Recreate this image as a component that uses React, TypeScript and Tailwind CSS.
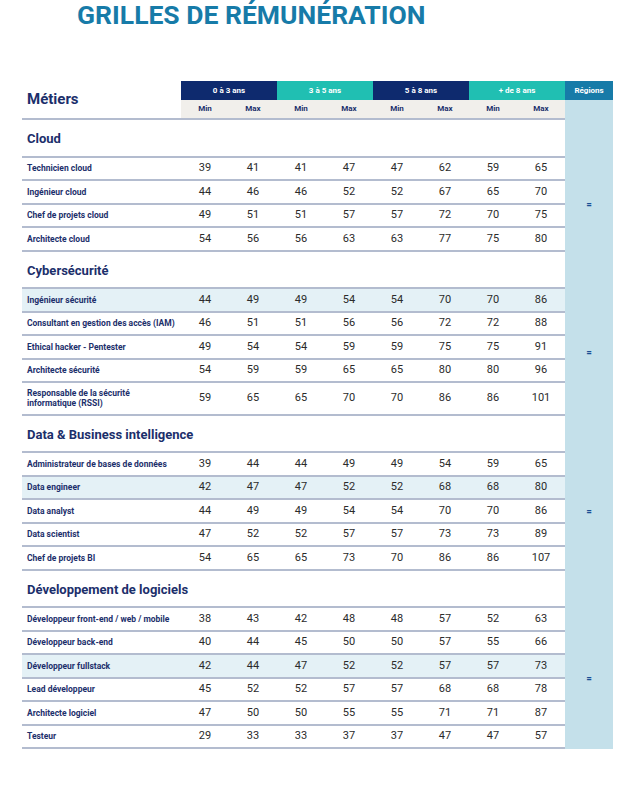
import React from "react";

type Row = { label: string; values: number[]; hl?: boolean; tall?: boolean };
type Section = { title: string; rows: Row[] };

const sections: Section[] = [
  {
    title: "Cloud",
    rows: [
      { label: "Technicien cloud", values: [39, 41, 41, 47, 47, 62, 59, 65] },
      { label: "Ingénieur cloud", values: [44, 46, 46, 52, 52, 67, 65, 70] },
      { label: "Chef de projets cloud", values: [49, 51, 51, 57, 57, 72, 70, 75] },
      { label: "Architecte cloud", values: [54, 56, 56, 63, 63, 77, 75, 80] },
    ],
  },
  {
    title: "Cybersécurité",
    rows: [
      { label: "Ingénieur sécurité", values: [44, 49, 49, 54, 54, 70, 70, 86], hl: true },
      { label: "Consultant en gestion des accès (IAM)", values: [46, 51, 51, 56, 56, 72, 72, 88] },
      { label: "Ethical hacker - Pentester", values: [49, 54, 54, 59, 59, 75, 75, 91] },
      { label: "Architecte sécurité", values: [54, 59, 59, 65, 65, 80, 80, 96] },
      {
        label: "Responsable de la sécurité informatique (RSSI)",
        values: [59, 65, 65, 70, 70, 86, 86, 101],
        tall: true,
      },
    ],
  },
  {
    title: "Data & Business intelligence",
    rows: [
      { label: "Administrateur de bases de données", values: [39, 44, 44, 49, 49, 54, 59, 65] },
      { label: "Data engineer", values: [42, 47, 47, 52, 52, 68, 68, 80], hl: true },
      { label: "Data analyst", values: [44, 49, 49, 54, 54, 70, 70, 86] },
      { label: "Data scientist", values: [47, 52, 52, 57, 57, 73, 73, 89] },
      { label: "Chef de projets BI", values: [54, 65, 65, 73, 70, 86, 86, 107] },
    ],
  },
  {
    title: "Développement de logiciels",
    rows: [
      { label: "Développeur front-end / web / mobile", values: [38, 43, 42, 48, 48, 57, 52, 63] },
      { label: "Développeur back-end", values: [40, 44, 45, 50, 50, 57, 55, 66] },
      { label: "Développeur fullstack", values: [42, 44, 47, 52, 52, 57, 57, 73], hl: true },
      { label: "Lead développeur", values: [45, 52, 52, 57, 57, 68, 68, 78] },
      { label: "Architecte logiciel", values: [47, 50, 50, 55, 55, 71, 71, 87] },
      { label: "Testeur", values: [29, 33, 33, 37, 37, 47, 47, 57] },
    ],
  },
];

const bands = [
  { label: "0 à 3 ans", cls: "bg-[#0e2a6e]" },
  { label: "3 à 5 ans", cls: "bg-[#20bfb2]" },
  { label: "5 à 8 ans", cls: "bg-[#0e2a6e]" },
  { label: "+ de 8 ans", cls: "bg-[#20bfb2]" },
];

function TableRow({ row }: { row: Row }) {
  return (
    <div
      className={`flex items-center border-b-2 border-[#b3bccf] ${row.tall ? "h-[32.5px]" : "h-[23.5px]"} ${row.hl ? "bg-[#e4f1f6]" : ""}`}
    >
      <div className="w-[159px] pl-[5px] pr-1 text-[8.5px] font-bold leading-[10.5px] text-[#1c2f6b]">
        {row.tall ? (
          <>
            Responsable de la sécurité
            <br />
            informatique (RSSI)
          </>
        ) : (
          row.label
        )}
      </div>
      {row.values.map((v, i) => (
        <div key={i} className="w-[48px] text-center text-[11px] text-[#2b2b2b]">
          {v}
        </div>
      ))}
    </div>
  );
}

function SectionBlock({ section }: { section: Section }) {
  return (
    <div>
      <div className="flex">
        <div className="flex h-[37.5px] w-[543px] items-center border-b-2 border-[#b3bccf] pl-[5px] pt-[2px] text-[13px] font-bold text-[#1c2f6b]">
          {section.title}
        </div>
        <div className="w-[48px] bg-[#c4e0ea]" />
      </div>
      <div className="flex">
        <div className="flex w-[543px] flex-col">
          {section.rows.map((r) => (
            <TableRow key={r.label} row={r} />
          ))}
        </div>
        <div className="flex w-[48px] items-center justify-center bg-[#c4e0ea] text-[10px] font-medium text-[#1a4f95]">
          =
        </div>
      </div>
    </div>
  );
}

export default function App() {
  return (
    <div className="min-h-screen bg-white font-['Roboto',sans-serif]">
      <h1 className="pl-[77px] pt-[1px] text-[26.5px] font-bold leading-[28px] text-[#177ba8]">
        GRILLES DE RÉMUNÉRATION
      </h1>

      <div className="mt-[52px] pl-[22px]">
        {/* header */}
        <div className="flex">
          <div className="flex w-[159px] items-center border-b-2 border-[#b3bccf] pl-[5px] text-[15px] font-bold text-[#1c2f6b]">
            Métiers
          </div>
          <div className="flex w-[384px] flex-col border-b-2 border-[#b3bccf]">
            <div className="flex h-[19px]">
              {bands.map((b) => (
                <div
                  key={b.label}
                  className={`flex w-[96px] items-center justify-center text-[8px] font-bold text-white ${b.cls}`}
                >
                  {b.label}
                </div>
              ))}
            </div>
            <div className="flex h-[18px] bg-[#f1efeb]">
              {bands.map((b) => (
                <React.Fragment key={b.label}>
                  <div className="flex w-[48px] items-center justify-center text-[8px] font-bold text-[#1c2f6b]">
                    Min
                  </div>
                  <div className="flex w-[48px] items-center justify-center text-[8px] font-bold text-[#1c2f6b]">
                    Max
                  </div>
                </React.Fragment>
              ))}
            </div>
          </div>
          <div className="flex w-[48px] flex-col">
            <div className="flex h-[19px] items-center justify-center bg-[#177ba8] text-[8px] font-bold text-white">
              Régions
            </div>
            <div className="flex-1 bg-[#c4e0ea]" />
          </div>
        </div>

        {sections.map((s) => (
          <SectionBlock key={s.title} section={s} />
        ))}
      </div>
    </div>
  );
}
